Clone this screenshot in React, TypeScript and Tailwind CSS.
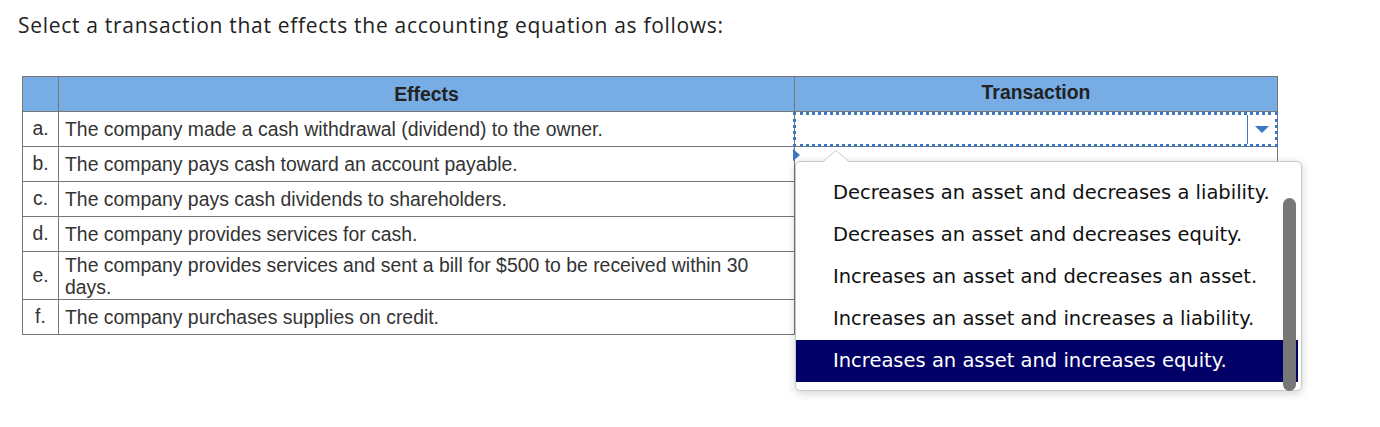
import React from "react";

const rows: { l: string; t: string; h: string }[] = [
  { l: "a.", t: "The company made a cash withdrawal (dividend) to the owner.", h: "h-[35px]" },
  { l: "b.", t: "The company pays cash toward an account payable.", h: "h-[35px]" },
  { l: "c.", t: "The company pays cash dividends to shareholders.", h: "h-[35px]" },
  { l: "d.", t: "The company provides services for cash.", h: "h-[35px]" },
  { l: "e.", t: "The company provides services and sent a bill for $500 to be received within 30 days.", h: "h-[48px]" },
  { l: "f.", t: "The company purchases supplies on credit.", h: "h-[35px]" },
];

const options = [
  "Decreases an asset and decreases a liability.",
  "Decreases an asset and decreases equity.",
  "Increases an asset and decreases an asset.",
  "Increases an asset and increases a liability.",
  "Increases an asset and increases equity.",
];

export default function App() {
  return (
    <div className="w-[1380px] h-[427px] bg-white relative overflow-hidden">
      <div className="pt-[12px] pl-[18px] text-[21px] leading-[26px] tracking-[0.7px] text-[#222] font-['Open_Sans',sans-serif]">
        Select a transaction that effects the accounting equation as follows:
      </div>
      <div className="relative ml-[22px] mt-[38px] w-[1255px]">
        <table className="border-collapse w-[1256px] font-['Liberation_Sans',Arial,sans-serif] text-[19.4px] text-[#333]">
          <thead>
            <tr className="h-[35px] bg-[#77ace4]">
              <th className="border border-[#777] w-[36px]"></th>
              <th className="border border-[#777] w-[736px] font-bold text-[#222] pt-[1px]">Effects</th>
              <th className="border border-[#777] font-bold text-[#222] pb-[2px]">Transaction</th>
            </tr>
          </thead>
          <tbody>
            {rows.map((r, i) => (
              <tr key={r.l} className={r.h}>
                <td className="border border-[#777] text-center align-middle">{r.l}</td>
                <td className="border border-[#777] pl-[6px] pr-[20px] leading-[22px] align-middle">{r.t}</td>
                {i === 0 ? (
                  <td className="border border-[#777] p-0 relative">
                    <div className="absolute left-[-2px] right-[-1px] top-0 bottom-[-1px] border-[3px] border-dotted border-[#3a78c3] flex justify-end items-stretch">
                      <div className="w-[28px] border-l border-[#3a78c3] flex items-center justify-center">
                        <svg width="14" height="8" viewBox="0 0 14 8">
                          <polygon points="0,0 14,0 7,7" fill="#3a78c3" />
                        </svg>
                      </div>
                    </div>
                  </td>
                ) : (
                  <td className="border border-[#777]"></td>
                )}
              </tr>
            ))}
          </tbody>
        </table>

        {/* small blue marker */}
        <svg className="absolute left-[771px] top-[73px]" width="8" height="12" viewBox="0 0 8 12">
          <polygon points="0,0 7,6 0,12" fill="#3a78c3" />
        </svg>

        {/* dropdown popup */}
        <div className="absolute left-[773px] top-[85px] w-[507px] h-[230px] bg-white border border-[#c8c8c8] rounded-[5px] shadow-[0_2px_10px_rgba(0,0,0,0.18)] font-['DejaVu_Sans',Verdana,sans-serif] text-[19.5px] text-[#111]">
          <svg className="absolute left-[26px] top-[-12px]" width="28" height="13" viewBox="0 0 28 13">
            <polygon points="0,12.5 14,0.5 28,12.5" fill="#ffffff" stroke="#c8c8c8" strokeWidth="1" />
            <rect x="0" y="12" width="28" height="2" fill="#ffffff" />
          </svg>
          <div className="pt-[10px] flex flex-col">
            {options.map((o, i) => (
              <div
                key={o}
                className={
                  i === 4
                    ? "h-[42px] flex items-center pl-[37px] bg-[#000066] text-white mr-[3px]"
                    : "h-[42px] flex items-center pl-[37px]"
                }
              >
                {o}
              </div>
            ))}
          </div>
          <div className="absolute right-[5px] top-[36px] bottom-[-1px] w-[13px] rounded-full bg-[#777]"></div>
        </div>
      </div>
    </div>
  );
}
